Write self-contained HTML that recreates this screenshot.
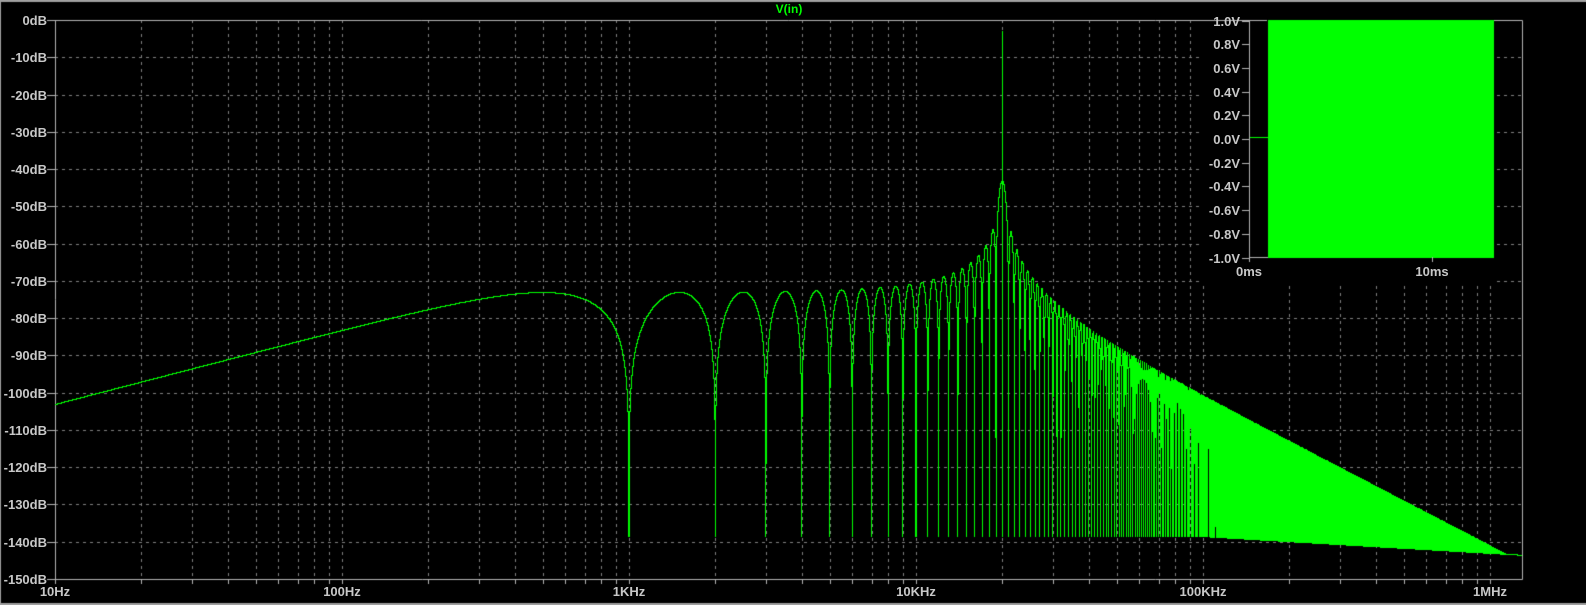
<!DOCTYPE html>
<html><head><meta charset="utf-8"><style>
html,body{margin:0;padding:0;background:#000;}
#w{position:relative;width:1586px;height:605px;overflow:hidden;background:#000;}
canvas{position:absolute;left:0;top:0;}
.l{position:absolute;font-family:"Liberation Sans",sans-serif;font-size:13px;font-weight:bold;color:#c8c8c8;line-height:13px;white-space:nowrap;}
.r{text-align:right;width:60px;}
.c{text-align:center;width:80px;}
</style></head><body><div id="w">
<canvas id="cv" width="1586" height="605"></canvas>
<div class="l" style="left:764px;top:3px;color:#00ff00;font-size:12px;width:50px;text-align:center;">V(in)</div>
<div id="labels"></div>
</div>
<script>
var cv=document.getElementById('cv'),c=cv.getContext('2d');
var L=55,T=20,B=579,R=1522,DEC=287;
function X(f){return L+DEC*Math.log10(f/10);}
function Y(db){return T+(-db)*(B-T)/150;}
// frame
c.fillStyle='#a0a0a0';c.fillRect(0,0,1586,2);c.fillRect(0,0,1,605);c.fillRect(0,603,1586,2);
c.strokeStyle='#808080';c.lineWidth=1;
c.setLineDash([3,4]);
// vertical grid
var xs=[];
for(var d=10;d<=1e6;d*=10)for(var k=1;k<10;k++){var f=d*k;var x=Math.round(X(f));if(x>L&&x<R)xs.push(x);}
xs.forEach(function(x){c.beginPath();c.moveTo(x+.5,T);c.lineTo(x+.5,B);c.stroke();});
for(var i=1;i<15;i++){var y=Math.round(Y(-10*i));c.beginPath();c.moveTo(L,y+.5);c.lineTo(R,y+.5);c.stroke();}
c.setLineDash([]);
c.strokeStyle='#b4b4b4';
c.beginPath();c.moveTo(L+.5,T);c.lineTo(L+.5,B+.5);c.lineTo(R+.5,B+.5);c.lineTo(R+.5,T+.5);c.lineTo(L,T+.5);c.stroke();
// ticks
c.beginPath();
for(var i=0;i<=15;i++){var y=Math.round(Y(-10*i))+.5;c.moveTo(47,y);c.lineTo(L,y);}
xs.forEach(function(x){c.moveTo(x+.5,B);c.lineTo(x+.5,B+5);});
[10,100,1000,1e4,1e5,1e6].forEach(function(f){var x=Math.round(X(f))+.5;c.moveTo(x,B);c.lineTo(x,B+5);});
c.stroke();
// spectrum
var f0=20000,Tm=0.001;
function mag(f){
  var s=Math.abs(Math.sin(Math.PI*f*Tm));
  var den=Math.abs(f0*f0-f*f),v;
  if(Math.abs(f-f0)<1e-6)v=Math.PI*Tm/2; else v=s*f0/den;
  var db=-73+20*Math.log10(v*f0+1e-30);
  var fl=-138.5-(f>1e5?5*Math.log10(f/1e5)/Math.log10(13):0);
  return Math.max(db,fl);
}
function floorv(f){return -138.5-(f>1e5?5*Math.log10(f/1e5)/Math.log10(13):0);}
c.fillStyle='#00ff00';
var prev=null;
for(var px=L;px<R;px++){
  var fa=10*Math.pow(10,(px-L)/DEC),fb=10*Math.pow(10,(px+1-L)/DEC);
  var mn=1e9,mx=-1e9;
  for(var j=0;j<=60;j++){var f=fa*Math.pow(fb/fa,j/60);var v=mag(f);if(v<mn)mn=v;if(v>mx)mx=v;}
  if(Math.floor(fb/1000)>Math.floor(fa/1000)){var fl=floorv(fa);if(fl<mn)mn=fl;}
  var y1=Y(mx),y2=Y(mn);
  if(prev!==null){if(prev<y1)y1=prev;if(prev>y2)y2=prev;}
  prev=Y(mag(fb));
  c.fillRect(px,Math.round(y1),1,Math.max(1,Math.round(y2)-Math.round(y1)+1));
}
c.fillRect(Math.round(X(20000)),31,1,160);
// inset
c.fillStyle='#000';c.fillRect(1203,21,291,262);
c.fillStyle='#00ff00';c.fillRect(1268,20,226,238);
c.fillRect(1249,137,19,1);
c.fillStyle='#000';c.fillRect(1267,20,1,13);
c.strokeStyle='#b4b4b4';
c.beginPath();c.moveTo(1249.5,20);c.lineTo(1249.5,257.5);c.lineTo(1268,257.5);
for(var i=0;i<=10;i++){var y=Math.round(20.5+i*23.7)+.5;c.moveTo(1242,y);c.lineTo(1249,y);}
c.moveTo(1249.5,257);c.lineTo(1249.5,262);c.moveTo(1432.5,257);c.lineTo(1432.5,262);
c.stroke();
// labels
var h='';
for(var i=0;i<=15;i++){var y=Math.round(Y(-10*i))-6;h+='<div class="l r" style="left:-13px;top:'+y+'px">'+(i?'-'+i*10:'0')+'dB</div>';}
var xl=[[10,'10Hz'],[100,'100Hz'],[1000,'1KHz'],[1e4,'10KHz'],[1e5,'100KHz'],[1e6,'1MHz']];
xl.forEach(function(a){h+='<div class="l c" style="left:'+(Math.round(X(a[0]))-40)+'px;top:585px">'+a[1]+'</div>';});
var vl=['1.0V','0.8V','0.6V','0.4V','0.2V','0.0V','-0.2V','-0.4V','-0.6V','-0.8V','-1.0V'];
vl.forEach(function(t,i){var y=Math.round(20.5+i*23.7)-6;h+='<div class="l r" style="left:1180px;top:'+y+'px">'+t+'</div>';});
h+='<div class="l c" style="left:1209px;top:265px">0ms</div><div class="l c" style="left:1392px;top:265px">10ms</div>';
document.getElementById('labels').innerHTML=h;
</script>
</body></html>
